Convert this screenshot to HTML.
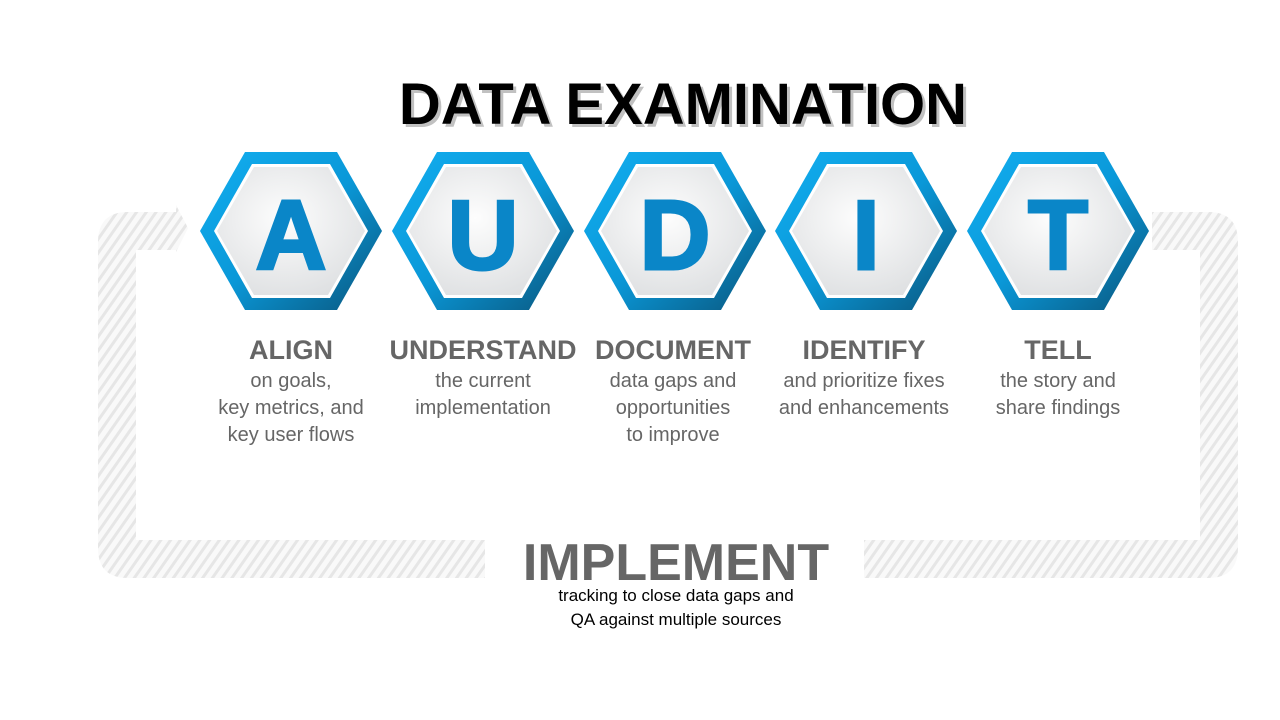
<!DOCTYPE html>
<html><head><meta charset="utf-8"><style>
html,body{margin:0;padding:0;background:#fff;width:1280px;height:720px;overflow:hidden;position:relative;font-family:"Liberation Sans",sans-serif}
.t{position:absolute;text-align:center;color:#666;font-family:"Liberation Sans Narrow","Liberation Sans",sans-serif}
.h{font-weight:bold;font-size:27px;top:335px}
.d{font-size:20px;line-height:27px;top:368px}
</style></head><body>
<svg width="1280" height="720" style="position:absolute;left:0;top:0">
<defs>
<pattern id="hat" width="8" height="8" patternUnits="userSpaceOnUse" patternTransform="rotate(35)">
<rect width="8" height="8" fill="#f9f9f9"/><rect width="3" height="8" fill="#e6e6e6"/>
</pattern>
<linearGradient id="bl" x1="0" y1="0" x2="1" y2="1">
<stop offset="0" stop-color="#12aef0"/><stop offset="0.5" stop-color="#0a98d8"/><stop offset="1" stop-color="#0a557c"/>
</linearGradient>
<radialGradient id="gf" cx="0.45" cy="0.4" r="0.7">
<stop offset="0" stop-color="#fdfdfd"/><stop offset="1" stop-color="#dcdee0"/>
</radialGradient>
<g id="hx" stroke="none">
<polygon points="-91,0 -46,-79 46,-79 91,0 46,79 -46,79" fill="url(#bl)"/>
<polygon points="-77,0 -39,-67 39,-67 77,0 39,67 -39,67" fill="#fff"/>
<polygon points="-74,0 -37,-64 37,-64 74,0 37,64 -37,64" fill="url(#gf)"/>
</g>
</defs>
<path fill="url(#hat)" fill-rule="evenodd" d="M98,242 Q98,212 128,212 L176,212 L176,205 L188,228 L176,252 L176,250 L136,250 L136,540 L485,540 L485,578 L128,578 Q98,578 98,548 Z"/>
<path fill="url(#hat)" d="M1152,212 L1208,212 Q1238,212 1238,242 L1238,548 Q1238,578 1208,578 L864,578 L864,540 L1200,540 L1200,250 L1152,250 Z"/>
<use href="#hx" x="291" y="231"/>
<use href="#hx" x="483" y="231"/>
<use href="#hx" x="675" y="231"/>
<use href="#hx" x="866" y="231"/>
<use href="#hx" x="1058" y="231"/>
<g font-family="Liberation Sans" font-weight="bold" font-size="98" fill="#0a86c8" stroke="#0a86c8" stroke-width="3" text-anchor="middle">
<text x="291" y="269">A</text>
<text x="483" y="269">U</text>
<text x="675" y="269">D</text>
<text x="866" y="269">I</text>
<text x="1058" y="269">T</text>
</g>
<text x="686" y="127" text-anchor="middle" font-family="Liberation Sans" font-weight="bold" font-size="58" fill="#999" opacity="0.6">DATA EXAMINATION</text>
<text x="683" y="124" text-anchor="middle" font-family="Liberation Sans" font-weight="bold" font-size="58" fill="#000">DATA EXAMINATION</text>
<text x="676" y="580" text-anchor="middle" font-family="Liberation Sans" font-weight="bold" font-size="52" fill="#666">IMPLEMENT</text>
<text x="676" y="601" text-anchor="middle" font-family="Liberation Sans" font-size="17" fill="#000">tracking to close data gaps and</text>
<text x="676" y="625" text-anchor="middle" font-family="Liberation Sans" font-size="17" fill="#000">QA against multiple sources</text>
</svg>
<div class="t h" style="left:191px;width:200px">ALIGN</div>
<div class="t d" style="left:191px;width:200px">on goals,<br>key metrics, and<br>key user flows</div>
<div class="t h" style="left:373px;width:220px">UNDERSTAND</div>
<div class="t d" style="left:383px;width:200px">the current<br>implementation</div>
<div class="t h" style="left:573px;width:200px">DOCUMENT</div>
<div class="t d" style="left:573px;width:200px">data gaps and<br>opportunities<br>to improve</div>
<div class="t h" style="left:764px;width:200px">IDENTIFY</div>
<div class="t d" style="left:754px;width:220px">and prioritize fixes<br>and enhancements</div>
<div class="t h" style="left:958px;width:200px">TELL</div>
<div class="t d" style="left:958px;width:200px">the story and<br>share findings</div>
</body></html>
